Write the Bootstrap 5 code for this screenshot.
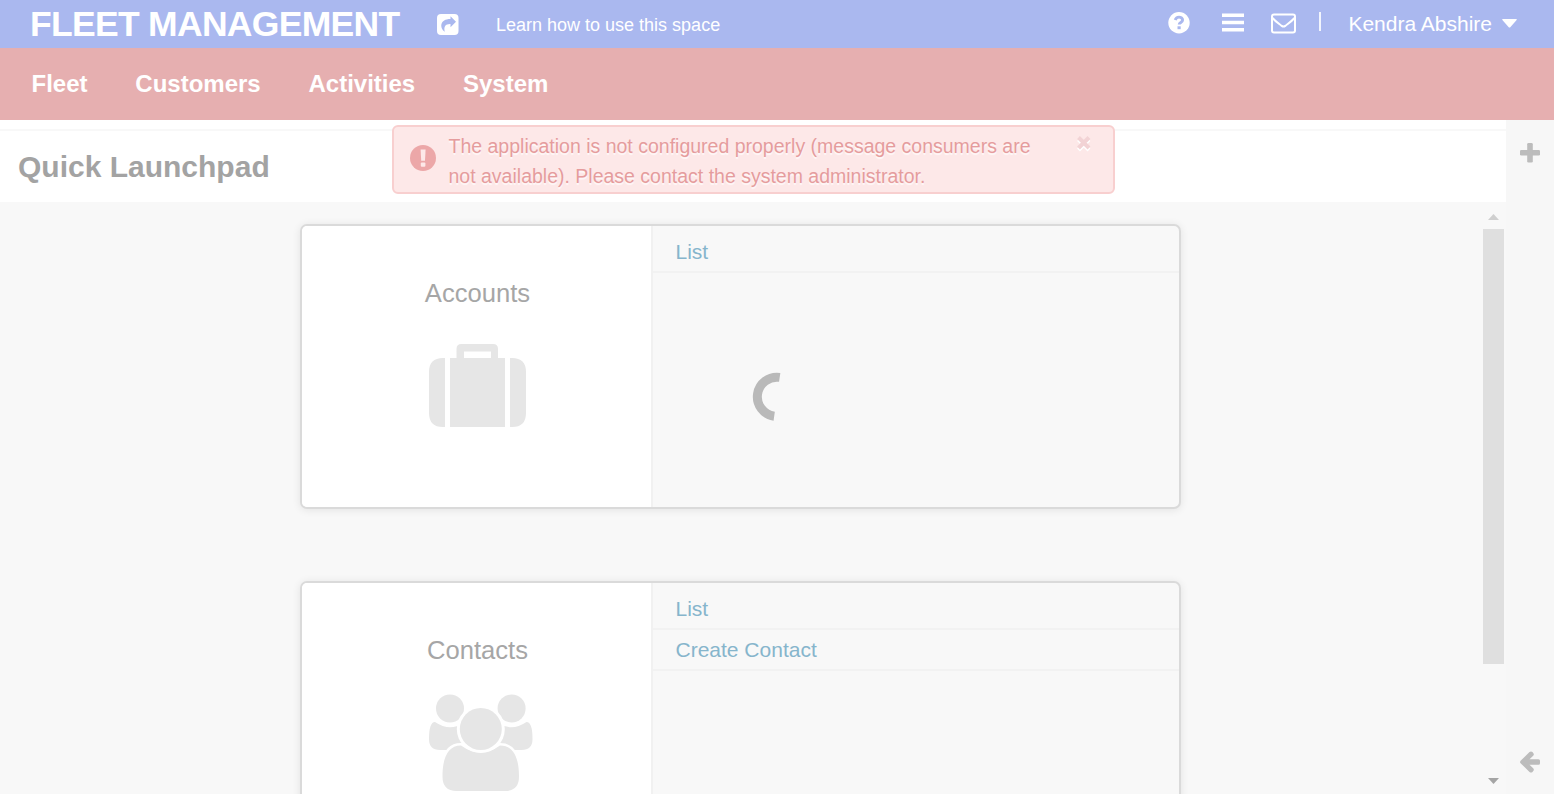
<!DOCTYPE html>
<html lang="en">
<head>
<meta charset="utf-8">
<title>Fleet Management</title>
<link href="https://cdn.jsdelivr.net/npm/bootstrap@5.3.0/dist/css/bootstrap.min.css" rel="stylesheet">
<style>
body{font-family:"Liberation Sans",Arial,sans-serif;background:#f8f8f8;height:794px;overflow:hidden;line-height:1.2}
svg{display:block;flex:none}
.topbar{height:48px;background:#aab8ef;color:#fff;padding-left:30px;padding-right:37px}
.brand{font-size:35.5px;font-weight:700;letter-spacing:-.7px;width:406px;line-height:46px}
.learn{font-size:18px;margin-left:36px;padding-top:3px}
.user{font-size:21px;margin-left:27px;padding-top:2px}
.mainnav{height:72px;background:#e6afb0;padding-left:31.500px;gap:47.800px}
.mainnav .nav-link{color:#fff;font-size:24px;font-weight:700;padding:0}
.titlebar{height:82px;background:#fff}
.titlebar .rule{height:2px;margin-top:9px;background:#f8f8f8}
.titlebar h1{font-size:30px;font-weight:700;color:#a3a3a3;margin:0;padding:18px 0 0 18px}
.notice{left:392px;top:125px;width:723px;height:69px;background:#fde8e8;border:2px solid #f8cfcf;border-radius:6px;color:#e59c9d;font-size:19.5px;line-height:30px;padding:4px 21px 0 15.500px;text-shadow:0 2px 1px rgba(255,255,255,.75)}
.launch{padding:22px 0 0 300px;gap:72px}
.tile{width:881px;height:285px;flex:none;border:2px solid #dadada;border-radius:7px;box-shadow:0 1px 9px rgba(0,0,0,.09);background:#f8f8f8;overflow:hidden}
.tile-side{width:351px;background:#fff;border-right:2px solid #f1f1f1}
.tile-side h2{font-size:25.600px;font-weight:400;color:#a6a6a6;margin:52px 0 0;line-height:31px;padding-left:2px}
.tile-links a{display:block;height:41px;border-bottom:2px solid #f2f2f2;color:#86b5cc;font-size:21px;line-height:39px;padding-left:22.500px;text-decoration:none}
.tile-links a:first-child{height:47px;line-height:51px}
.spin{margin:99px 0 0 99px}
.scroller{width:23px;padding-top:12px}
.thumb{width:21px;height:435px;background:#dfdfdf;margin-top:9px}
.rail{width:48px;background:#f7f7f7;padding:23px 0 21px}
</style>
<script src="https://cdn.jsdelivr.net/npm/bootstrap@5.3.0/dist/js/bootstrap.bundle.min.js"></script>
</head>
<body class="d-flex flex-column">
<header class="topbar d-flex align-items-center flex-shrink-0">
  <div class="brand text-nowrap">FLEET MANAGEMENT</div>
  <svg width="24" height="24" viewBox="0 0 24 24"><rect x="1" y="2" width="21.500" height="21" rx="4" fill="#fff"/><path d="M14.500 4.300 20 9.700l-5.500 5.600V12c-5-.2-7 2.500-5.700 7.800C3.500 16 3.500 7 14.500 7Z" fill="#aab8ef"/></svg>
  <div class="learn">Learn how to use this space</div>
  <div class="d-flex align-items-center ms-auto" style="padding-bottom:2px">
    <svg width="22" height="22" viewBox="0 0 22 22"><circle cx="11" cy="10.700" r="10.700" fill="#fff"/><path d="M7.200 8C8 5.500 9.300 5.100 11 5.100c2 0 3.600 1.200 3.600 3 0 2.500-3.400 2.300-3.400 4.500" fill="none" stroke="#aab8ef" stroke-width="2.900"/><path d="M9.500 14.300h3.200v2.900H9.500z" fill="#aab8ef"/></svg>
    <svg width="22" height="20" viewBox="0 0 22 20" style="margin-left:32px"><path d="M0 2.200h22M0 9.500h22M0 16.800h22" stroke="#fff" stroke-width="3.600"/></svg>
    <svg width="25" height="21" viewBox="0 0 25 21" style="margin-left:27px"><rect x="1" y="1.500" width="23" height="18" rx="2" fill="none" stroke="#fff" stroke-width="2"/><path d="M1.500 5c3 3.500 7 6 9.200 7.900q1.800 1.300 3.600 0C16.500 11 20.500 8.500 23.500 5" fill="none" stroke="#fff" stroke-width="2"/></svg>
    <span class="bg-white" style="width:2px;height:19px;margin-left:23px;margin-bottom:3px;opacity:.85"></span>
    <span class="user">Kendra Abshire</span>
    <svg width="15" height="9" viewBox="0 0 15 9" style="margin-left:10px"><path d="M.8 0h13.400q1 0 .4.900L8.500 7.900q-1 1-2 0L.4.900Q-.2 0 .8 0Z" fill="#fff"/></svg>
  </div>
</header>
<nav class="mainnav nav align-items-center flex-shrink-0">
  <a class="nav-link" href="#">Fleet</a><a class="nav-link" href="#">Customers</a><a class="nav-link" href="#">Activities</a><a class="nav-link" href="#">System</a>
</nav>
<div class="d-flex flex-grow-1" style="min-height:0">
  <main class="d-flex flex-column flex-grow-1" style="min-width:0">
    <div class="titlebar flex-shrink-0 d-flex flex-column"><div class="rule"></div><h1>Quick Launchpad</h1></div>
    <div class="d-flex flex-grow-1 overflow-hidden">
      <div class="launch d-flex flex-column flex-grow-1">
        <section class="tile d-flex">
          <div class="tile-side d-flex flex-column align-items-center flex-shrink-0">
            <h2>Accounts</h2>
            <svg width="97" height="83" viewBox="429 344 97 83" style="margin-top:35px;margin-left:2px" fill="#e6e6e6"><path d="M445 358v69h-2q-14 0-14-14v-41q0-14 14-14ZM510 358h2q14 0 14 14v41q0 14-14 14h-2ZM450 358h6.500v-9q0-5 5-5h31.500q5 0 5 5v9h7v69h-55ZM464 358h27v-6.500h-27Z" fill-rule="evenodd"/></svg>
          </div>
          <div class="tile-links flex-grow-1"><a href="#">List</a>
            <svg class="spin" width="30" height="50" viewBox="752 372 30 50"><path d="M779.700 377.400A19.500 19.500 0 1 0 774.200 416.200" fill="none" stroke="#b9b9b9" stroke-width="9"/></svg>
          </div>
        </section>
        <section class="tile d-flex">
          <div class="tile-side d-flex flex-column align-items-center flex-shrink-0">
            <h2>Contacts</h2>
            <svg width="104" height="98" viewBox="429 694 104 98" style="margin-top:28px;margin-left:9px" fill="#e6e6e6"><path d="M435 722q15 10 28 1v27h-23q-11 0-11-11 0-17 6-17ZM526.500 722q-15 10-28 1v27h23q11 0 11-11 0-17-6-17Z"/><circle cx="450" cy="708.500" r="16.500" fill="#fff"/><circle cx="450" cy="708.500" r="14"/><circle cx="511.600" cy="708.500" r="16.500" fill="#fff"/><circle cx="511.600" cy="708.500" r="14"/><path d="M461 745.500q19.500 14 39 0c14 0 19 13 19 31q0 14.500-14 14.500h-48.500q-14 0-14-14.500c0-18 5-31 18.500-31Z" stroke="#fff" stroke-width="5" paint-order="stroke"/><circle cx="480.800" cy="729" r="24" fill="#fff"/><circle cx="480.800" cy="729" r="21"/></svg>
          </div>
          <div class="tile-links flex-grow-1"><a href="#">List</a><a href="#">Create Contact</a></div>
        </section>
      </div>
      <div class="scroller flex-shrink-0">
        <svg width="21" height="6" viewBox="0 0 21 6"><path d="M10.500 0 16 6H5Z" fill="#cfcfcf"/></svg>
        <div class="thumb"></div>
        <svg width="21" height="6" viewBox="0 0 21 6" style="margin-top:114px"><path d="M5 0h11l-5.500 6Z" fill="#a5a5a5"/></svg>
      </div>
    </div>
  </main>
  <aside class="rail d-flex flex-column align-items-center justify-content-between flex-shrink-0">
    <svg width="20" height="20" viewBox="0 0 20 20" fill="#bcbcbc"><rect y="7" width="20" height="5.500" rx="1.300"/><rect x="7.200" y="0" width="5.600" height="19.500" rx="1.300"/></svg>
    <svg width="20" height="22" viewBox="0 0 20 22"><path d="M9.500 1.100q1.500-1.400 3 0l.7.800q1.300 1.400 0 2.800L9.500 8.300h9q1.500 0 1.500 1.500v2.400q0 1.500-1.500 1.500h-9l3.700 3.600q1.300 1.400 0 2.800l-.7.800q-1.500 1.400-3 0L.6 12.300q-1.100-1.300 0-2.600Z" fill="#bcbcbc"/></svg>
  </aside>
</div>
<div class="notice position-absolute d-flex align-items-start" role="alert">
  <svg width="26" height="26" viewBox="0 0 26 26" style="margin-top:14px"><circle cx="13" cy="13" r="13" fill="#eca7a8"/><path d="M10.600 4.500h5l-.6 11.200h-3.800Z" fill="#fde8e8"/><rect x="10.800" y="17.500" width="4.600" height="4.300" rx="1" fill="#fde8e8"/></svg>
  <div class="text-nowrap" style="margin-left:13px">The application is not configured properly (message consumers are<br>not available). Please contact the system administrator.</div>
  <svg width="16" height="18" viewBox="0 0 16 18" class="ms-auto" style="margin-top:4px"><path d="m2.500 4.500 10.500 10.500M13 4.500 2.500 15" stroke="#fff" stroke-width="4"/><path d="m2.500 2.500 10.500 10.500M13 2.500 2.500 13" stroke="#f2d3d5" stroke-width="4"/></svg>
</div>
</body>
</html>
